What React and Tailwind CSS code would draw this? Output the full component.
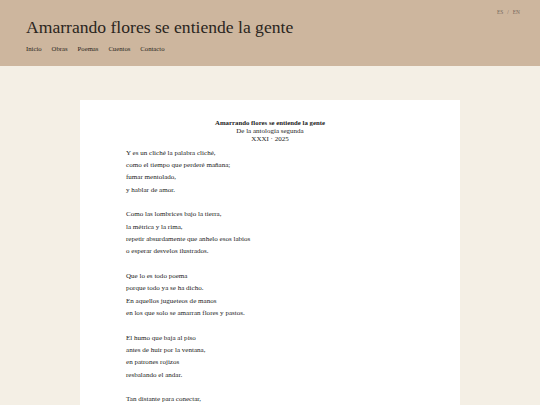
const poem = [
  [
    'Y es un cliché la palabra cliché,',
    'como el tiempo que perderé mañana;',
    'fumar mentolado,',
    'y hablar de amor.',
  ],
  [
    'Como las lombrices bajo la tierra,',
    'la métrica y la rima,',
    'repetir absurdamente que anhelo esos labios',
    'o esperar desvelos ilustrados.',
  ],
  [
    'Que lo es todo poema',
    'porque todo ya se ha dicho.',
    'En aquellos jugueteos de manos',
    'en los que solo se amarran flores y pastos.',
  ],
  [
    'El humo que baja al piso',
    'antes de huir por la ventana,',
    'en patrones rojizos',
    'resbalando el andar.',
  ],
  [
    'Tan distante para conectar,',
    'y a la vez tan cerca del olvido.',
    'Amarrando flores se entiende la gente.',
  ],
];

const nav = ['Inicio', 'Obras', 'Poemas', 'Cuentos', 'Contacto'];

export default function App() {
  return (
    <div className="min-h-screen bg-[#f4efe5] text-[#222] font-['Liberation_Serif','Times_New_Roman',serif]">
      <header className="bg-[#cdb69e] pt-[9px] pb-[13px]">
        <div className="flex justify-end pr-[20px] h-[6px] text-[5.4px] leading-[6px] text-[#74685d] gap-[4px]">
          <span>ES</span>
          <span>/</span>
          <span>EN</span>
        </div>
        <div className="px-[26px]">
          <h1 className="mt-[2px] text-[17.6px] leading-[20px] text-[#2a2520]">
            Amarrando flores se entiende la gente
          </h1>
          <nav className="mt-[8px] flex gap-[10px] text-[6.7px] leading-[8px] text-[#2a2520]">
            {nav.map(item => (
              <a key={item} href="#">{item}</a>
            ))}
          </nav>
        </div>
      </header>

      <main className="pt-[34px]">
        <article className="mx-auto w-[380px] bg-white pt-[19px] pb-[40px] px-[46px]">
          <div className="text-center text-[7px] leading-[8.2px]">
            <p className="font-bold text-[6.8px]">Amarrando flores se entiende la gente</p>
            <p>De la antología segunda</p>
            <p>XXXI · 2025</p>
          </div>
          <div className="mt-[3px] text-[7.05px] leading-[12.35px] flex flex-col gap-[12.35px]">
            {poem.map((stanza, i) => (
              <div key={i}>
                {stanza.map(line => (
                  <p key={line}>{line}</p>
                ))}
              </div>
            ))}
          </div>
        </article>
      </main>
    </div>
  );
}
